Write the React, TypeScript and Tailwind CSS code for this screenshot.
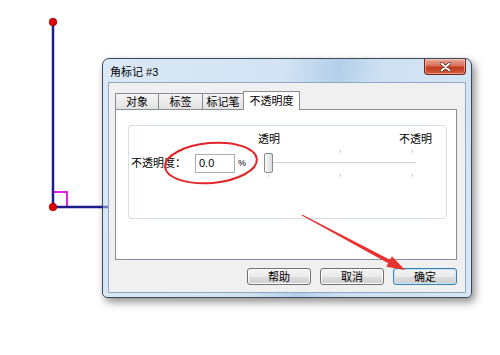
import React from "react";

const font = "font-['Liberation_Sans','Noto_Sans_CJK_SC',sans-serif]";

function Tab({ label, w, selected }: { label: string; w: string; selected?: boolean }) {
  if (selected) {
    return (
      <div
        className={`${w} h-[19px] -ml-px flex items-center justify-center border border-b-0 border-[#898c95] bg-white text-[11px] leading-[14px] text-black relative z-10`}
      >
        {label}
      </div>
    );
  }
  return (
    <div
      className={`${w} h-[17px] -ml-px first:ml-0 flex items-center justify-center border border-b-0 border-[#898c95] bg-gradient-to-b from-[#f4f4f4] to-[#e1e1e1] text-[11px] leading-[14px] text-black`}
    >
      {label}
    </div>
  );
}

function Button({ label, primary }: { label: string; primary?: boolean }) {
  return (
    <div
      className={`w-[64px] h-[17px] rounded-[3px] border ${
        primary ? "border-[#3c7fb1] shadow-[inset_0_0_0_1px_#bfe6fa]" : "border-[#707070] shadow-[inset_0_0_0_1px_#fcfcfc]"
      } bg-[linear-gradient(to_bottom,#f3f3f3_0%,#ebebeb_50%,#dddddd_51%,#cfcfcf_100%)] flex items-center justify-center text-[11px] leading-[14px] text-black`}
    >
      {label}
    </div>
  );
}

export default function App() {
  return (
    <div className={`relative w-[500px] h-[355px] bg-white overflow-hidden ${font}`}>
      {/* geometry drawing */}
      <svg className="absolute left-0 top-0" width="500" height="355" viewBox="0 0 500 355">
        <polyline points="53,192 67,192 67,207" fill="none" stroke="#e61ee6" strokeWidth="2" />
        <line x1="53" y1="22" x2="53" y2="207" stroke="#1c1c8c" strokeWidth="2.5" />
        <line x1="53" y1="207" x2="110" y2="207" stroke="#1c1c8c" strokeWidth="2.5" />
        <circle cx="53" cy="22" r="3.8" fill="#e00000" stroke="#a00000" strokeWidth="0.8" />
        <circle cx="53" cy="207" r="3.8" fill="#e00000" stroke="#a00000" strokeWidth="0.8" />
      </svg>

      {/* dialog window */}
      <div className="absolute left-[102px] top-[58px] w-[370px] h-[240px] rounded-t-[7px] rounded-b-[5px] border border-[#3d4856] bg-[linear-gradient(100deg,#dbe8f5_0%,#d2e3f3_45%,#b3cfeb_58%,#cde0f2_68%,#d6e6f5_100%)] shadow-[3px_4px_9px_rgba(0,0,0,0.45)] flex flex-col">
        {/* title bar */}
        <div className="h-[23px] flex justify-between items-start">
          <div className="pl-[7px] pt-[6px] text-[11px] leading-[14px] text-black">角标记 #3</div>
          <div className="mr-[5px] w-[42px] h-[16px] rounded-b-[4px] border border-t-0 border-[#6e2418] bg-[linear-gradient(to_bottom,#e9a998_0%,#d8705a_45%,#c23b1f_55%,#d45a3a_100%)] shadow-[inset_0_0_0_1px_rgba(255,220,210,0.5)] flex items-center justify-center">
            <svg width="11" height="10" viewBox="0 0 11 10">
              <path d="M1.5 1.5 L9.5 8.5 M9.5 1.5 L1.5 8.5" stroke="#5a1a10" strokeWidth="3.4" strokeLinecap="round" />
              <path d="M1.5 1.5 L9.5 8.5 M9.5 1.5 L1.5 8.5" stroke="#ffffff" strokeWidth="2" strokeLinecap="round" />
            </svg>
          </div>
        </div>

        {/* client area */}
        <div className="mx-[5px] mb-[4px] flex-1 bg-[#f0f0f0] border border-[#8fa8c3] pt-[8px] pl-[6px] pr-[8px] flex flex-col">
          {/* tabs */}
          <div className="h-[19px] flex items-end">
            <Tab label="对象" w="w-[44px]" />
            <Tab label="标签" w="w-[45px]" />
            <Tab label="标记笔" w="w-[42px]" />
            <Tab label="不透明度" w="w-[57px]" selected />
          </div>
          {/* tab panel */}
          <div className="-mt-px h-[151px] border border-[#898c95] bg-white pl-[12px] pt-[15px]">
            {/* group box */}
            <div className="w-[319px] h-[94px] border border-[#d5dfe5] rounded-[3px] flex flex-col">
              <div className="pt-[6px] pr-[14px] flex text-[11px] leading-[14px] text-black">
                <div className="w-[129px]" />
                <div>透明</div>
                <div className="flex-1" />
                <div>不透明</div>
              </div>
              <div className="mt-[3px] h-[28px] pl-[2px] flex items-center text-[11px] leading-[14px] text-black">
                <div className="w-[64px]">不透明度：</div>
                <div className="w-[40px] h-[19px] border border-[#abadb3] bg-white pl-[3px] flex items-center">0.0</div>
                <div className="w-[26px] pl-[3px] text-[9px]">%</div>
                <div className="relative w-[158px] h-[28px]">
                  <div className="absolute left-[7px] w-[148px] top-[13px] h-[2px] bg-[#d4d4d4] border-b border-[#f4f4f4]" />
                  <div className="absolute left-[79px] top-[1px] w-px h-[3px] bg-[#cfcfcf]" />
                  <div className="absolute left-[151px] top-[1px] w-px h-[3px] bg-[#cfcfcf]" />
                  <div className="absolute left-[79px] top-[25px] w-px h-[3px] bg-[#cfcfcf]" />
                  <div className="absolute left-[151px] top-[25px] w-px h-[3px] bg-[#cfcfcf]" />
                  <div className="absolute left-[7px] top-[25px] w-px h-[3px] bg-[#cfcfcf]" />
                  <div className="absolute left-[3px] top-[4px] w-[9px] h-[20px] rounded-[2px] border border-[#8a8a8a] bg-gradient-to-r from-[#fafafa] to-[#dadada]" />
                </div>
              </div>
            </div>
          </div>
          {/* buttons */}
          <div className="mt-[8px] flex justify-end gap-[9px]">
            <Button label="帮助" />
            <Button label="取消" />
            <Button label="确定" primary />
          </div>
        </div>
      </div>

      {/* annotations overlay */}
      <svg className="absolute left-0 top-0 pointer-events-none" width="500" height="355" viewBox="0 0 500 355">
        <line x1="102" y1="207" x2="108" y2="207" stroke="#1c1c8c" strokeOpacity="0.55" strokeWidth="2.5" />
        <ellipse cx="211" cy="163" rx="46" ry="20" fill="none" stroke="#e3262a" strokeWidth="2" transform="rotate(-5 211 163)" />
        <polygon points="301.8,215.4 302.2,214.6 390.0,259.7 391.9,256.2 405,270 386.3,266.8 388.2,263.3" fill="#e8322f" />
      </svg>
    </div>
  );
}
